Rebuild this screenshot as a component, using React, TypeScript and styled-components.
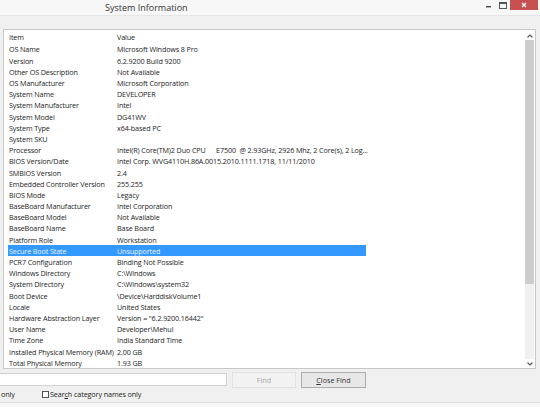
import styled, { createGlobalStyle } from 'styled-components';

const GlobalStyle = createGlobalStyle`
  html, body {
    margin: 0;
    padding: 0;
    width: 540px;
    height: 407px;
    overflow: hidden;
    background: #f0f0f0;
  }
  * {
    box-sizing: border-box;
  }
`;

const rows: [string, string][] = [
  ['OS Name', 'Microsoft Windows 8 Pro'],
  ['Version', '6.2.9200 Build 9200'],
  ['Other OS Description', 'Not Available'],
  ['OS Manufacturer', 'Microsoft Corporation'],
  ['System Name', 'DEVELOPER'],
  ['System Manufacturer', 'Intel'],
  ['System Model', 'DG41WV'],
  ['System Type', 'x64-based PC'],
  ['System SKU', ''],
  ['Processor', 'Intel(R) Core(TM)2 Duo CPU      E7500  @ 2.93GHz, 2926 Mhz, 2 Core(s), 2 Log...'],
  ['BIOS Version/Date', 'Intel Corp. WVG4110H.86A.0015.2010.1111.1718, 11/11/2010'],
  ['SMBIOS Version', '2.4'],
  ['Embedded Controller Version', '255.255'],
  ['BIOS Mode', 'Legacy'],
  ['BaseBoard Manufacturer', 'Intel Corporation'],
  ['BaseBoard Model', 'Not Available'],
  ['BaseBoard Name', 'Base Board'],
  ['Platform Role', 'Workstation'],
  ['Secure Boot State', 'Unsupported'],
  ['PCR7 Configuration', 'Binding Not Possible'],
  ['Windows Directory', 'C:\\Windows'],
  ['System Directory', 'C:\\Windows\\system32'],
  ['Boot Device', '\\Device\\HarddiskVolume1'],
  ['Locale', 'United States'],
  ['Hardware Abstraction Layer', 'Version = "6.2.9200.16442"'],
  ['User Name', 'Developer\\Mehul'],
  ['Time Zone', 'India Standard Time'],
  ['Installed Physical Memory (RAM)', '2.00 GB'],
  ['Total Physical Memory', '1.93 GB'],
];

const Window = styled.div`
  width: 540px;
  height: 407px;
  display: flex;
  flex-direction: column;
  font-family: 'Open Sans', 'Noto Sans', sans-serif;
  color: #1c1c1c;
`;

const TitleBar = styled.div`
  height: 16px;
  background: #f7f7f7;
  display: flex;
  align-items: flex-start;
  border-bottom: 1px solid #e6e6e6;
`;

const Title = styled.div`
  flex: 1;
  padding-left: 105px;
  padding-top: 1px;
  font-size: 9px;
  line-height: 13px;
  color: #333;
`;

const CaptionButton = styled.div<{ $close?: boolean }>`
  width: ${(p) => (p.$close ? '28px' : '14px')};
  height: 10px;
  background: ${(p) => (p.$close ? '#c75050' : 'transparent')};
  display: flex;
  align-items: center;
  justify-content: center;
  margin-right: ${(p) => (p.$close ? '2px' : '0')};
`;

const MenuBar = styled.div`
  height: 13px;
  background: #f0f0f0;
`;

const Body = styled.div`
  display: flex;
  padding-left: 3px;
  padding-right: 4px;
`;

const ListPanel = styled.div`
  flex: 1;
  height: 340px;
  background: #fff;
  border: 1px solid #c8c8c8;
  display: flex;
`;

const Table = styled.div`
  flex: 1;
  padding-left: 5px;
  overflow: hidden;
`;

const Row = styled.div<{ $header?: boolean; $selected?: boolean }>`
  display: grid;
  grid-template-columns: 108px 250px;
  height: ${(p) => (p.$header ? '13.4px' : '11.2px')};
  align-items: center;
  font-size: 7.2px;
  letter-spacing: -0.12px;
  white-space: pre;
  background: ${(p) => (p.$selected ? '#3399ff' : 'transparent')};
  color: ${(p) => (p.$selected ? '#e8f2ff' : 'inherit')};
  width: ${(p) => (p.$selected ? '358px' : 'auto')};
  margin-left: ${(p) => (p.$selected ? '-1px' : '0')};
  padding-left: ${(p) => (p.$selected ? '1px' : '0')};
`;

const Cell = styled.span`
  overflow: visible;
  padding-top: 1px;
`;

const Scrollbar = styled.div`
  width: 11px;
  display: flex;
  flex-direction: column;
  align-items: center;
  background: #fdfdfd;
  padding-top: 1px;
`;

const Track = styled.div`
  flex: 1;
  width: 9px;
  background: #f0f0f0;
  display: flex;
  flex-direction: column;
`;

const Thumb = styled.div`
  height: 244px;
  width: 9px;
  background: #cdcdcd;
`;

const Arrow = styled.div`
  height: 9px;
  display: flex;
  align-items: center;
  justify-content: center;
`;

const FindBar = styled.div`
  flex: 1;
  display: flex;
  flex-direction: column;
  padding-top: 3px;
  border-bottom: 1px solid #dcdcdc;
  font-size: 8px;
`;

const FindRow = styled.div`
  display: flex;
  align-items: center;
  height: 15px;
`;

const Input = styled.div`
  width: 227px;
  height: 13px;
  background: #fff;
  border: 1px solid #d0d0d0;
  border-left: none;
`;

const Button = styled.div<{ $disabled?: boolean }>`
  width: ${(p) => (p.$disabled ? '64px' : '65px')};
  height: 16px;
  margin-left: 5px;
  display: flex;
  align-items: center;
  justify-content: center;
  font-size: 7.2px;
  background: ${(p) => (p.$disabled ? '#f2f2f2' : '#e7e7e7')};
  border: 1px solid ${(p) => (p.$disabled ? '#e2e2e2' : '#adadad')};
  color: ${(p) => (p.$disabled ? '#a9a9a9' : '#333')};
`;

const OptionRow = styled.div`
  display: flex;
  align-items: center;
  height: 14px;
  font-size: 7.2px;
  letter-spacing: -0.1px;
`;

const OnlyLabel = styled.span`
  width: 42px;
  padding-left: 1px;
`;

const Checkbox = styled.span`
  width: 7px;
  height: 7px;
  border: 1px solid #555;
  background: #fff;
  margin-right: 1px;
`;

const StatusBar = styled.div`
  height: 4px;
  background: #f7f7f7;
`;

const App = () => {
  return (
    <>
      <GlobalStyle />
      <Window>
        <TitleBar>
          <Title>System Information</Title>
          <CaptionButton>
            <svg width="6" height="6" viewBox="0 0 6 6">
              <rect x="0" y="4" width="5" height="1.4" fill="#444" />
            </svg>
          </CaptionButton>
          <CaptionButton>
            <svg width="8" height="7" viewBox="0 0 8 7">
              <rect x="0.5" y="0.5" width="7" height="6" fill="none" stroke="#555" strokeWidth="1" />
              <rect x="0.5" y="0.5" width="7" height="1.5" fill="#555" />
            </svg>
          </CaptionButton>
          <CaptionButton $close>
            <svg width="6" height="6" viewBox="0 0 6 6">
              <path d="M1 1 L5 5 M5 1 L1 5" stroke="#fff" strokeWidth="1.3" />
            </svg>
          </CaptionButton>
        </TitleBar>
        <MenuBar />
        <Body>
          <ListPanel>
            <Table>
              <Row $header>
                <Cell>Item</Cell>
                <Cell>Value</Cell>
              </Row>
              {rows.map(([item, value]) => (
                <Row key={item} $selected={item === 'Secure Boot State'}>
                  <Cell>{item}</Cell>
                  <Cell>{value}</Cell>
                </Row>
              ))}
            </Table>
            <Scrollbar>
              <Arrow>
                <svg width="6" height="4" viewBox="0 0 6 4">
                  <path d="M0.5 3.5 L3 1 L5.5 3.5" fill="none" stroke="#555" strokeWidth="1.1" />
                </svg>
              </Arrow>
              <Track>
                <Thumb />
              </Track>
              <Arrow>
                <svg width="6" height="4" viewBox="0 0 6 4">
                  <path d="M0.5 0.5 L3 3 L5.5 0.5" fill="none" stroke="#555" strokeWidth="1.1" />
                </svg>
              </Arrow>
            </Scrollbar>
          </ListPanel>
        </Body>
        <FindBar>
          <FindRow>
            <Input />
            <Button $disabled>Find</Button>
            <Button>
              <span>
                <u>C</u>lose Find
              </span>
            </Button>
          </FindRow>
          <OptionRow>
            <OnlyLabel>only</OnlyLabel>
            <Checkbox />
            <span>
              Sear<u>c</u>h category names only
            </span>
          </OptionRow>
        </FindBar>
        <StatusBar />
      </Window>
    </>
  );
};

export default App;
